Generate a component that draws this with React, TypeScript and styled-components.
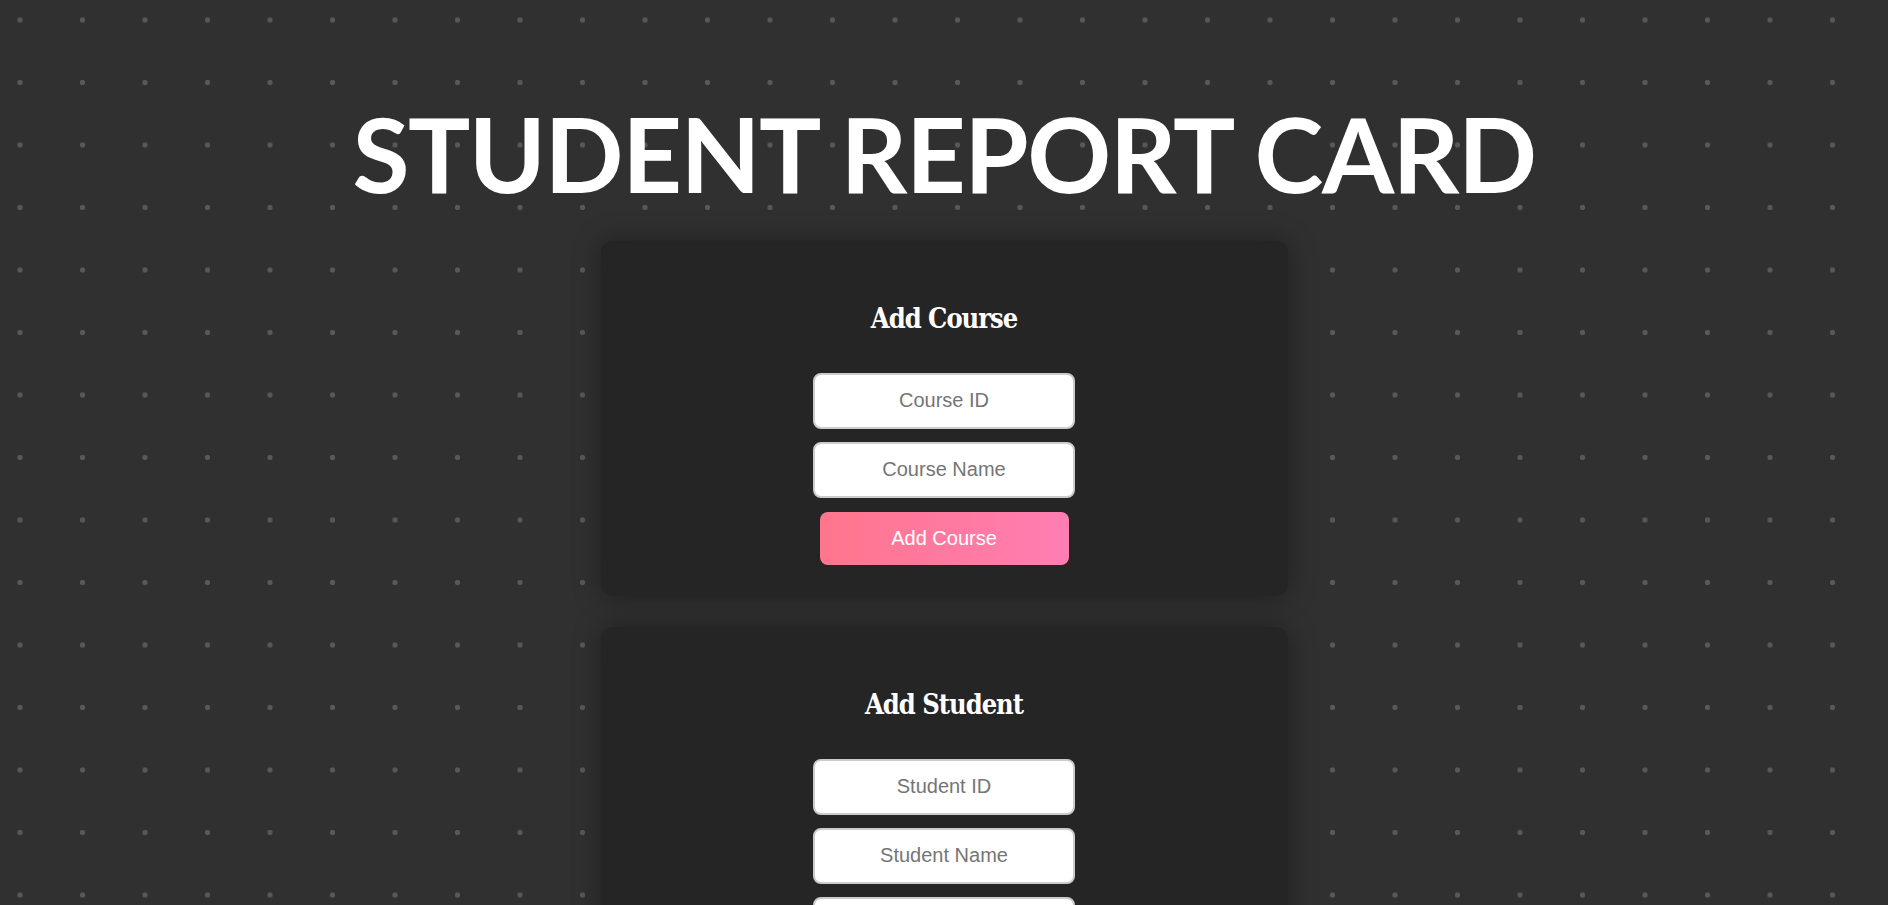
import React from "react";
import styled, { createGlobalStyle } from "styled-components";

const GlobalStyle = createGlobalStyle`
  html, body {
    margin: 0;
    padding: 0;
  }

  body {
    min-height: 100vh;
    background-color: #303030;
    background-image: radial-gradient(circle, #585858 2.4px, transparent 3px);
    background-size: 62.5px 62.5px;
    background-position: -11.25px -11.25px;
    font-family: "Liberation Sans", Arial, sans-serif;
  }
`;

const Page = styled.div`
  display: flex;
  flex-direction: column;
  align-items: center;
  padding-top: 101px;
  padding-bottom: 40px;
`;

const Title = styled.h1`
  margin: 0 0 36px 0;
  font-family: Lato, "DejaVu Sans Condensed", sans-serif;
  font-weight: 700;
  font-size: 104px;
  line-height: 1;
  letter-spacing: -1.5px;
  color: #ffffff;
  text-align: center;
`;

const Card = styled.div`
  width: 687px;
  box-sizing: border-box;
  padding: 61px 0 31px 0;
  margin-bottom: 31px;
  display: flex;
  flex-direction: column;
  align-items: center;
  background-color: #252525;
  border-radius: 12px;
  box-shadow: 0 0 28px rgba(0, 0, 0, 0.35);
`;

const CardTitle = styled.h2`
  margin: 0 0 37px 0;
  font-family: "DejaVu Serif Condensed", "DejaVu Serif", serif;
  font-stretch: condensed;
  font-weight: 700;
  font-size: 27px;
  line-height: 1.25;
  letter-spacing: -1px;
  color: #ffffff;
`;

const Form = styled.form`
  display: flex;
  flex-direction: column;
  align-items: center;
  gap: 13px;
`;

const Input = styled.input`
  width: 262px;
  height: 56px;
  box-sizing: border-box;
  padding: 0 10px;
  border: 2px solid #cccccc;
  border-radius: 8px;
  background: #ffffff;
  font-family: "Liberation Sans", Arial, sans-serif;
  font-size: 20px;
  color: #333;
  text-align: center;
  outline: none;

  &::placeholder {
    color: #757575;
  }
`;

const SubmitButton = styled.button`
  width: 249px;
  height: 53px;
  margin-top: 1px;
  border: none;
  border-radius: 8px;
  background: linear-gradient(to right, #ff758c, #ff7eb3);
  color: #ffffff;
  font-family: "Liberation Sans", Arial, sans-serif;
  font-size: 20px;
  cursor: pointer;
`;

type Field = { name: string; placeholder: string };

const forms: { title: string; button: string; fields: Field[] }[] = [
  {
    title: "Add Course",
    button: "Add Course",
    fields: [
      { name: "courseId", placeholder: "Course ID" },
      { name: "courseName", placeholder: "Course Name" },
    ],
  },
  {
    title: "Add Student",
    button: "Add Student",
    fields: [
      { name: "studentId", placeholder: "Student ID" },
      { name: "studentName", placeholder: "Student Name" },
      { name: "studentCourse", placeholder: "Course ID" },
      { name: "grade", placeholder: "Grade" },
    ],
  },
];

const App: React.FC = () => {
  return (
    <>
      <GlobalStyle />
      <Page>
        <Title>STUDENT REPORT CARD</Title>
        {forms.map((form) => (
          <Card key={form.title}>
            <CardTitle>{form.title}</CardTitle>
            <Form onSubmit={(e) => e.preventDefault()}>
              {form.fields.map((f) => (
                <Input key={f.name} name={f.name} placeholder={f.placeholder} />
              ))}
              <SubmitButton type="submit">{form.button}</SubmitButton>
            </Form>
          </Card>
        ))}
      </Page>
    </>
  );
};

export default App;
